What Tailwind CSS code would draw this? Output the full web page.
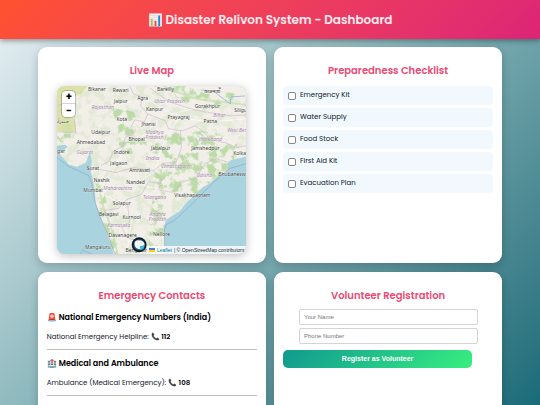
<!DOCTYPE html>
<html lang="en">
<head>
<meta charset="utf-8">
<meta name="viewport" content="width=device-width, initial-scale=1">
<title>Disaster Relivon System - Dashboard</title>
<script src="https://cdn.jsdelivr.net/npm/@tailwindcss/browser@4"></script>
</head>
<body class="min-h-screen overflow-x-hidden bg-linear-135 from-[#e9f1f5] via-[#83b2b7] to-[#186b78] font-[Poppins,Inter,sans-serif] text-black">
<div class="h-screen overflow-hidden">
<header class="relative flex h-[39px] items-center justify-center bg-linear-135 from-[#ff512f] to-[#dd2476] shadow-[0_2px_5px_rgba(0,0,0,0.35)]">
  <h1 class="text-[12px] leading-4 font-semibold text-white/90">📊 Disaster Relivon System - Dashboard</h1>
</header>
<main class="mx-auto grid w-[86%] grid-cols-2 gap-x-2 gap-y-[9px] pt-2">
  <section class="rounded-[9px] bg-white px-[9px] pt-4 pb-[9px] shadow-[0_3px_10px_rgba(0,0,0,0.2)]">
    <h2 class="text-center text-[10px] leading-4 font-semibold text-[#e94b72]">Live Map</h2>
    <div class="relative mx-auto mt-[7px] w-[90%] overflow-hidden rounded-lg bg-[#aad3df] shadow-[0_2px_10px_rgba(0,0,0,0.25)]">
      <svg viewBox="57 86 190 169" class="block w-full font-['Noto_Sans',sans-serif]" role="img" aria-label="Map of India">
        <defs>
          <filter id="terrain" x="0" y="0" width="100%" height="100%" color-interpolation-filters="sRGB">
            <feTurbulence type="fractalNoise" baseFrequency="0.11" numOctaves="4" seed="8" result="n"/>
            <feColorMatrix in="n" values="0 0 0 0 .74  0 0 0 0 .86  0 0 0 0 .66  6 0 0 0 -2.8"/>
            <feComposite operator="in" in2="SourceGraphic"/>
          </filter>
          <clipPath id="landclip"><path d="M57 86H247V157L238 159 232 160 228 164 229 169 226 173 217 178 210 184 203 188 195 196 187 203 180 212 173 216 167 220 164 228 165 238 166 255H114L108 237 104 227 100 215 96 205 95 192 93 180 91 172 92 161 90 152 86 163 77 167 69 165 63 158 57 151Z"/></clipPath>
        </defs>
        <path fill="#a9d3de" d="M57 86h190v169H57z"/>
        <g clip-path="url(#landclip)">
          <path fill="#f2efe9" d="M57 86h190v169H57z"/>
          <path fill="#dde1aa" d="M57 86h31l-7 8-9 2-1 16 4 10 1 10-10 1-9-2z"/>
          <path fill="#a9d3de" d="M57 146l8-1 3 2-5 4-6 1z"/>
          <path filter="url(#terrain)" opacity=".3" d="M57 86h190v169H57z"/>
          <g filter="url(#terrain)"><path d="M166 135l20-6 30 4 22 12-5 20-40 36-24-8-10-24zM155 172l16 8-4 36-6 36-12-6zM96 185l6-2 8 35 12 40h-12zM112 106l22 6 8 18-22 10zM120 142h40v12h-44zM57 134h18l-2 12-16-4zM154 86h90v10l-40 14z"/></g>
          <path fill="none" stroke="#c9e0b4" stroke-width="2" opacity=".8" d="M164 86q14 6 24 10t26 5 33 4M99 187l4 19 8 21 7 28"/>
          <path fill="#f2efe9" d="M186 86h61v9l-22-3-18 2z"/>
          <g fill="none" stroke="#fff" stroke-width=".6"><path d="M91 144l12-22 19-18 24-6 33 20 32 4 36-3M94 190l18-17 10-19 16-12 24-26 46-10M94 190l28 15 10 14-4 30M136 184l20-12 5-23 18-31M136 184l57 14 42-23 8-21-32-32"/></g>
          <g fill="none" stroke="#c9b5cc" stroke-width=".6"><path d="M130 86l4 8 9 3-2 9 7 8-3 8-10-2-4 8 3 7-8 2-3 10-9 4-5 11-8 4M148 114l18 7 3 8 14 2 13-5 7 5 8 9 15 3 12 5 10-2M93 169l13 2 10 2 18-5 20 3 9-7 14-2 5-14-1-17M154 171l8 9-3 10 14 3 10-11 14-3 8-15 12-5 13 4M104 211l15-2 8-9 15-5 7-13 13 2M128 206l2 17-8 5 5 10 11 4 11 10M150 88l20 14 25 8 17 3 20 3 15-1M57 106l15-5M57 132l19 1-2-18"/></g>
          <path fill="none" stroke="#7fa0d8" stroke-width=".8" opacity=".8" d="M202 90l12 1 9 7 8 6 1-7 14-1"/>
        </g>
        <path fill="none" stroke="#8fa0c5" stroke-width=".6" d="M57 158l12 9 20 9 3 8 3 18 5 15 8 18 6 17 2 3M80 255l3-4 9 4M247 164l-17 5-16 14-12 12-13 13-14 13-8 4-2 5v25"/>
        <g fill="#404040" stroke="#fff" stroke-opacity=".7" stroke-width=".5" paint-order="stroke" font-size="5" text-anchor="middle">
          <text x="97" y="91">Bikaner</text><text x="121" y="92">Rewari</text><text x="166" y="91">Bareilly</text><text x="213" y="93">काठमाडौँ</text><text x="121" y="103">Jaipur</text><text x="143" y="100">Agra</text><text x="155" y="111">Kanpur</text><text x="208" y="108">Gorakhpur</text><text x="235" y="112" text-anchor="start">Siliguri</text><text x="179" y="119">Prayagraj</text><text x="122" y="121">Kota</text><text x="211" y="123">Patna</text><text x="149" y="126">Jhansi</text><text x="101" y="134">Udaipur</text><text x="91" y="144">Ahmedabad</text><text x="137" y="141">Bhopal</text><text x="161" y="150">Jabalpur</text><text x="206" y="150">Jamshedpur</text><text x="122" y="154">Indore</text><text x="234" y="155" text-anchor="start">Kolkata</text><text x="119" y="165">Jalgaon</text><text x="93" y="170">Surat</text><text x="140" y="172">Amravati</text><text x="219" y="176" text-anchor="start">Bhubaneswar</text><text x="102" y="182">Nashik</text><text x="136" y="184">Nanded</text><text x="93" y="192">Mumbai</text><text x="193" y="198">Visakhapatnam</text><text x="122" y="206">Solapur</text><text x="109" y="217">Belagavi</text><text x="132" y="220">Kurnool</text><text x="123" y="238">Davanagere</text><text x="162" y="237">Nellore</text><text x="98" y="250">Mangaluru</text><text x="138" y="253">Bengaluru</text><text x="61" y="123">حیدرآباد</text><text x="65" y="153" text-anchor="end">Jamnagar</text>
        </g>
        <g fill="#a886ae" stroke="#fff" stroke-opacity=".6" stroke-width=".5" paint-order="stroke" font-size="5" font-style="italic" text-anchor="middle">
          <text x="103" y="109">Rajasthan</text><text x="170" y="103">Uttar Pradesh</text><text x="220" y="117">Bihar</text><text x="228" y="132" text-anchor="start">West Bengal</text><text x="155" y="134">Madhya</text><text x="155" y="139">Pradesh</text><text x="211" y="141">Jharkhand</text><text x="85" y="154">Gujarat</text><text x="153" y="160" font-size="6">India</text><text x="176" y="168">Chhattisgarh</text><text x="205" y="177">Odisha</text><text x="118" y="190">Maharashtra</text><text x="155" y="200">Telangana</text><text x="158" y="217">Andhra</text><text x="158" y="222">Pradesh</text><text x="119" y="228">Karnataka</text>
        </g>
        <circle cx="139.500" cy="245.500" r="7.500" fill="#0f1f2e"/>
        <circle cx="139.500" cy="245.500" r="5.600" fill="#2b5878"/>
        <path fill="#f3f8fb" d="M135 246q-1-5 4-5 6 0 6 5l-3 1-1 3q-5 0-6-4z"/>
        <path fill="#35bde3" d="M140 247l5-1q0 4-4 5z"/>
      </svg>
      <div class="absolute top-[5px] left-[5px] flex w-[13px] flex-col overflow-hidden rounded-sm bg-white text-[10px] font-bold shadow-[0_0_0_1px_rgba(0,0,0,0.2)]">
        <button type="button" aria-label="Zoom in" class="h-[13px] border-b border-gray-300 leading-3">+</button>
        <button type="button" aria-label="Zoom out" class="h-[13px] leading-3">−</button>
      </div>
      <p class="absolute right-0 bottom-0 flex h-2 items-center gap-0.5 bg-white/80 px-0.5 font-['Liberation_Sans',sans-serif] text-[5px] leading-2 whitespace-nowrap text-gray-800">
        <svg viewBox="0 0 12 8" class="h-1 w-1.5" aria-hidden="true"><path fill="#4c7be1" d="M0 0h12v4H0z"/><path fill="#ffd500" d="M0 4h12v4H0z"/></svg>
        <a href="#" class="text-[#0078a8]">Leaflet</a><span>| © OpenStreetMap contributors</span>
      </p>
    </div>
  </section>

  <section class="rounded-[9px] bg-white px-[9px] pt-4 pb-[9px] shadow-[0_3px_10px_rgba(0,0,0,0.2)]">
    <h2 class="text-center text-[10px] leading-4 font-semibold text-[#e94b72]">Preparedness Checklist</h2>
    <ul class="mt-[7px] flex flex-col gap-[3px] text-[7px] text-gray-900">
      <li><label class="flex h-[19px] items-center gap-1 rounded-sm bg-[#f1f9ff] px-[5px]"><input type="checkbox" class="size-[8px] appearance-none rounded-[2px] border border-[#868686] bg-white">Emergency Kit</label></li>
      <li><label class="flex h-[19px] items-center gap-1 rounded-sm bg-[#f1f9ff] px-[5px]"><input type="checkbox" class="size-[8px] appearance-none rounded-[2px] border border-[#868686] bg-white">Water Supply</label></li>
      <li><label class="flex h-[19px] items-center gap-1 rounded-sm bg-[#f1f9ff] px-[5px]"><input type="checkbox" class="size-[8px] appearance-none rounded-[2px] border border-[#868686] bg-white">Food Stock</label></li>
      <li><label class="flex h-[19px] items-center gap-1 rounded-sm bg-[#f1f9ff] px-[5px]"><input type="checkbox" class="size-[8px] appearance-none rounded-[2px] border border-[#868686] bg-white">First Aid Kit</label></li>
      <li><label class="flex h-[19px] items-center gap-1 rounded-sm bg-[#f1f9ff] px-[5px]"><input type="checkbox" class="size-[8px] appearance-none rounded-[2px] border border-[#868686] bg-white">Evacuation Plan</label></li>
    </ul>
  </section>

  <section class="rounded-[9px] bg-white px-[9px] pt-4 pb-4 shadow-[0_3px_10px_rgba(0,0,0,0.2)]">
    <h2 class="text-center text-[10px] leading-4 font-semibold text-[#e94b72]">Emergency Contacts</h2>
    <div class="mt-2 border-b border-[#bdbdbd] pb-1.5">
      <h3 class="text-[8px] leading-3 font-semibold">🚨 National Emergency Numbers (India)</h3>
      <p class="mt-[7px] text-[7px] leading-3 text-gray-900">National Emergency Helpline: <strong class="font-semibold text-black">📞 112</strong></p>
    </div>
    <div class="mt-2 border-b border-[#bdbdbd] pb-1.5">
      <h3 class="text-[8px] leading-3 font-semibold">🏥 Medical and Ambulance</h3>
      <p class="mt-[7px] text-[7px] leading-3 text-gray-900">Ambulance (Medical Emergency): <strong class="font-semibold text-black">📞 108</strong></p>
    </div>
  </section>

  <section class="rounded-[9px] bg-white px-[9px] pt-4 pb-4 shadow-[0_3px_10px_rgba(0,0,0,0.2)]">
    <h2 class="text-center text-[10px] leading-4 font-semibold text-[#e94b72]">Volunteer Registration</h2>
    <form class="mt-[5px] font-['Liberation_Sans',sans-serif]">
      <div class="ml-4 flex w-[85%] flex-col gap-[3px]">
        <input type="text" aria-label="Your Name" placeholder="Your Name" class="h-4 rounded-[2px] border border-[#d4d4d4] px-1 text-[6px] placeholder:text-[#757575]">
        <input type="tel" aria-label="Phone Number" placeholder="Phone Number" class="h-4 rounded-[2px] border border-[#d4d4d4] px-1 text-[6px] placeholder:text-[#757575]">
      </div>
      <button type="submit" class="mt-1 h-[18px] w-[90%] rounded-[5px] bg-linear-135 from-[#11998e] to-[#38ef7d] text-[7px] font-bold text-white">Register as Volunteer</button>
    </form>
  </section>
</main>
</div>
</body>
</html>
